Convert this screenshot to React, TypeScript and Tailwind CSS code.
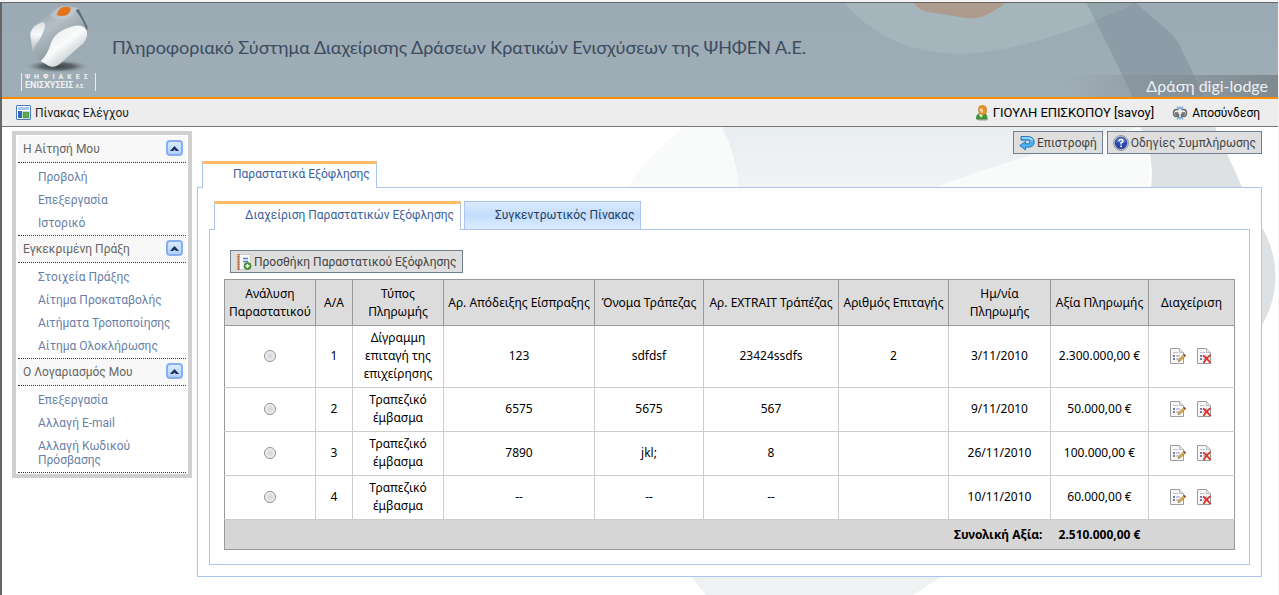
import { ReactNode, useState } from 'react';

const menu = [
    { title: 'Η Αίτησή Μου', items: ['Προβολή', 'Επεξεργασία', 'Ιστορικό'] },
    { title: 'Εγκεκριμένη Πράξη', items: ['Στοιχεία Πράξης', 'Αίτημα Προκαταβολής', 'Αιτήματα Τροποποίησης', 'Αίτημα Ολοκλήρωσης'] },
    { title: 'Ο Λογαριασμός Μου', items: ['Επεξεργασία', 'Αλλαγή E-mail', 'Αλλαγή Κωδικού Πρόσβασης'] },
];

const columns = [
    { label: 'Ανάλυση Παραστατικού', width: 'w-[91px]' },
    { label: 'Α/Α', width: 'w-[37px]' },
    { label: 'Τύπος Πληρωμής', width: 'w-[91px]' },
    { label: 'Αρ. Απόδειξης Είσπραξης', width: 'w-[151px]' },
    { label: 'Όνομα Τράπεζας', width: 'w-[109px]' },
    { label: 'Αρ. EXTRAIT Τράπέζας', width: 'w-[135px]' },
    { label: 'Αριθμός Επιταγής', width: 'w-[110px]' },
    { label: 'Ημ/νία Πληρωμής', width: 'w-[102px]' },
    { label: 'Αξία Πληρωμής', width: 'w-[98px]' },
    { label: 'Διαχείριση', width: 'w-[86px]' },
];

const payments = [
    { id: 1, type: 'Δίγραμμη επιταγή της επιχείρησης', receipt: '123', bank: 'sdfdsf', extrait: '23424ssdfs', cheque: '2', date: '3/11/2010', amount: '2.300.000,00 €' },
    { id: 2, type: 'Τραπεζικό έμβασμα', receipt: '6575', bank: '5675', extrait: '567', cheque: '', date: '9/11/2010', amount: '50.000,00 €' },
    { id: 3, type: 'Τραπεζικό έμβασμα', receipt: '7890', bank: 'jkl;', extrait: '8', cheque: '', date: '26/11/2010', amount: '100.000,00 €' },
    { id: 4, type: 'Τραπεζικό έμβασμα', receipt: '--', bank: '--', extrait: '--', cheque: '', date: '10/11/2010', amount: '60.000,00 €' },
];

function Logo() {
    return (
        <svg width="80" height="70" viewBox="30 6 240 210" aria-hidden="true">
            <defs>
                <linearGradient id="gem" x1="0" y1="0" x2="0.6" y2="1">
                    <stop offset="0" stopColor="#84939c" />
                    <stop offset="0.4" stopColor="#b4bfc5" />
                    <stop offset="1" stopColor="#7a8890" />
                </linearGradient>
                <linearGradient id="petalLeft" x1="0" y1="0" x2="0" y2="1">
                    <stop offset="0" stopColor="#dbe0e3" />
                    <stop offset="0.4" stopColor="#f7f8f9" />
                    <stop offset="1" stopColor="#a9b4ba" />
                </linearGradient>
                <linearGradient id="petalRight" x1="0.2" y1="0" x2="0.9" y2="0.8">
                    <stop offset="0" stopColor="#e4e8ea" />
                    <stop offset="0.5" stopColor="#fafbfb" />
                    <stop offset="0.8" stopColor="#cfd5d8" />
                    <stop offset="1" stopColor="#7f8e96" />
                </linearGradient>
                <radialGradient id="gemShadow">
                    <stop offset="0" stopColor="#3c4246" />
                    <stop offset="0.5" stopColor="#5d666b" />
                    <stop offset="1" stopColor="#9eacb5" stopOpacity="0" />
                </radialGradient>
            </defs>
            <ellipse cx="142" cy="196" rx="100" ry="20" fill="url(#gemShadow)" />
            <path d="M135 24 Q155 12 180 17 Q198 17 206 24 L230 72 Q236 90 230 108 Q226 122 214 134 L150 188 Q134 202 116 194 L78 170 Q68 162 68 146 L60 104 Q60 88 74 72 Z" fill="url(#gem)" />
            <path d="M61 98 Q66 74 98 63 Q110 66 102 86 Q94 110 82 124 Q70 142 69 156 L66 138 Z" fill="url(#petalLeft)" />
            <path d="M92 180 Q112 162 122 128 Q136 86 196 74 Q222 72 231 90 Q234 104 226 118 Q220 130 208 138 L150 188 Q134 202 116 194 Z" fill="url(#petalRight)" />
            <path d="M196 28 L206 24 L232 76 Q234 84 230 88 Q218 54 196 28 Z" fill="#5f6f78" />
            <path d="M120 42 Q150 68 184 44 Q200 34 200 22 Q180 14 158 15 Q142 18 120 42 Z" fill="#c3ccd1" opacity="0.6" />
            <path d="M140 42 Q144 24 160 18 Q176 15 182 20 Q182 34 170 42 Q156 48 140 42 Z" fill="#e2731b" />
        </svg>
    );
}

function DashboardIcon() {
    return (
        <svg width="15" height="15" viewBox="0 0 15 15" aria-hidden="true">
            <rect x="0.5" y="0.5" width="14" height="14" rx="0.5" fill="#fff" stroke="#4a7abf" />
            <rect x="2" y="2" width="11" height="3" fill="#a9c8ef" />
            <rect x="2" y="6" width="4" height="7" fill="#2f66bb" />
            <rect x="7" y="7" width="6" height="6" fill="#5cab4d" stroke="#3f8a35" strokeWidth="0.6" />
        </svg>
    );
}

function UserIcon() {
    return (
        <svg width="14" height="16" viewBox="0 0 14 16" aria-hidden="true">
            <ellipse cx="7.5" cy="14.5" rx="6" ry="1.3" fill="#b5b5b5" />
            <path d="M1.500 14 Q1 9 5 8.500 H9 Q12.500 9 12 14 Z" fill="#3f9a30" stroke="#2c7522" strokeWidth="0.6" />
            <path d="M4 9 L6 13 L8.500 9 Z" fill="#e9f4e5" />
            <path d="M3.500 4 Q3.500 0.500 7.200 0.500 Q11.500 0.500 11.500 4.500 V7.500 Q9.500 10.500 7 9.500 Q3.500 9 3.500 4 Z" fill="#e8921f" stroke="#a66410" strokeWidth="0.5" />
            <path d="M4.500 4 Q7 2.500 8 4.500 V8 Q5 8 4.500 4 Z" fill="#fbd59c" />
        </svg>
    );
}

function LogoutIcon() {
    return (
        <svg width="16" height="14" viewBox="0 0 16 14" fill="none" aria-hidden="true">
            <path d="M6.500 3.500 H4.500 Q1.500 3.500 1.500 7 Q1.500 10.500 4.500 10.500 H6.500 V8.700 H4.500 Q3.500 8.500 3.500 7 H6.500" stroke="#666" strokeWidth="1.400" />
            <path d="M9.500 3.500 H11.500 Q14.500 3.500 14.500 7 Q14.500 10.500 11.500 10.500 H9.500 V8.700 H11.500 Q12.500 8.500 12.500 7 H9.500" stroke="#666" strokeWidth="1.400" />
            <path d="M5 0.500 L7 3 M8 0.500 V3 M11 0.500 L9 3 M5 13.500 L7 11 M8 13.500 V11 M11 13.500 L9 11" stroke="#5b95ea" strokeWidth="1.200" />
        </svg>
    );
}

function BackIcon() {
    return (
        <svg width="16" height="16" viewBox="0 0 16 16" aria-hidden="true">
            <path d="M2 1.500 H9 Q15.200 2 15.200 7 Q15.200 12.200 9 12.200 H6.500 V15 L0.800 10.500 L6.500 6.500 V8.800 H9 Q11 8.800 11 7 Q11 5.200 9 5.200 H2 Z" fill="#4db1f0" stroke="#1b6fba" strokeWidth="0.9" strokeLinejoin="round" />
            <path d="M3 2.800 H9 Q12.500 3 13.500 5.500" fill="none" stroke="#b5e2fb" strokeWidth="1.200" />
        </svg>
    );
}

function HelpIcon() {
    return (
        <svg width="16" height="16" viewBox="0 0 16 16" aria-hidden="true">
            <circle cx="8" cy="8" r="7.500" fill="#d5d8de" stroke="#80858f" strokeWidth="0.8" />
            <circle cx="8" cy="8" r="6" fill="#2a48ae" stroke="#1a2d7e" strokeWidth="0.6" />
            <path d="M3 7 Q4 2.500 8 2.500 Q12 2.500 13 7 Q8 8.500 3 7 Z" fill="#6a86dc" opacity="0.7" />
            <path d="M6 6.200 Q6 4.400 8 4.400 Q10 4.400 10 6 Q10 7.200 8.100 7.800 V9.400" fill="none" stroke="#fff" strokeWidth="1.500" />
            <rect x="7.300" y="10.500" width="1.600" height="1.600" fill="#fff" />
        </svg>
    );
}

function AddIcon() {
    return (
        <svg width="16" height="16" viewBox="0 0 16 16" aria-hidden="true">
            <rect x="2.500" y="0.500" width="12" height="15" rx="1" fill="#fafafa" stroke="#c2c2c2" strokeWidth="0.8" />
            <rect x="1.500" y="0" width="2" height="16" fill="#a9572a" />
            <path d="M0.500 1.500 H3 M0.500 4 H3 M0.500 6.500 H3 M0.500 9 H3 M0.500 11.500 H3 M0.500 14 H3" stroke="#e8c4a8" strokeWidth="0.9" />
            <path d="M7 4.500 H12 M7 7.500 H12" stroke="#4e86df" strokeWidth="1.400" />
            <circle cx="11.500" cy="12" r="3.600" fill="#4c9a35" stroke="#2b6b1b" strokeWidth="0.6" />
            <path d="M11.500 10 V14 M9.500 12 H13.500" stroke="#fff" strokeWidth="1.300" />
        </svg>
    );
}

function PageShape() {
    return (
        <>
            <path d="M0.500 0.500 H9.500 L13.500 4.500 V15.500 H0.500 Z" fill="#f8f8f8" stroke="#9c9c9c" />
            <path d="M9.500 0.500 V4.500 H13.500" fill="#e4e4e4" stroke="#bcbcbc" />
            <path d="M3 4.500 H8" stroke="#c3c3cc" />
            <path d="M3 8 H5 M3 11 H5" stroke="#4d4d86" strokeWidth="1.600" />
            <path d="M6 8 H10 M6 11 H9" stroke="#9a9ab4" />
        </>
    );
}

function EditIcon() {
    return (
        <svg width="16" height="16" viewBox="0 0 16 16" aria-hidden="true">
            <PageShape />
            <path d="M8 13.500 L9 11.300 L13.700 6.700 L15.300 8.200 L10.300 12.800 Z" fill="#e8b84c" stroke="#8a6a2c" strokeWidth="0.7" />
            <path d="M13.400 7 L14.500 5.900 L16 7.300 L15 8.400 Z" fill="#8c2f39" />
        </svg>
    );
}

function DeleteIcon() {
    return (
        <svg width="16" height="16" viewBox="0 0 16 16" aria-hidden="true">
            <PageShape />
            <path d="M6 7.500 Q10 10 13.500 15 M13.500 7 Q9 10 6.500 15" fill="none" stroke="#dd3322" strokeWidth="1.800" />
        </svg>
    );
}

function HeaderArt() {
    return (
        <svg className="absolute top-0 right-0 h-full w-[440px]" viewBox="0 0 440 94" preserveAspectRatio="xMaxYMin slice" aria-hidden="true">
            <path d="M6 0 Q50 50 120 51 Q190 50 300 0 Z" fill="#a5b5bc" />
            <path d="M76 0 Q80 7 90 9 L128 15 Q145 18 167 0 Z" fill="#ad9c8e" />
            <path d="M249 0 H298 L329 27 Q338 34 343 45 L366 94 H295 Z" fill="#8e9ca7" />
            <path d="M249 0 H298 Q275 11 257 17 Z" fill="#93a5ac" />
        </svg>
    );
}

function PageArt() {
    return (
        <svg className="absolute top-0 right-0 h-[468px] w-[660px]" viewBox="0 0 660 468" aria-hidden="true">
            <defs>
                <linearGradient id="sheet" x1="0" y1="0" x2="0" y2="1">
                    <stop offset="0" stopColor="#e9eef0" />
                    <stop offset="1" stopColor="#f1f3f5" />
                </linearGradient>
            </defs>
            <path d="M67 0 Q32 26 8 62 H121 Q118 27 104 0 Z" fill="#f9fafa" />
            <path d="M104 0 H524 Q420 22 313 62 H121 Q118 27 104 0 Z" fill="url(#sheet)" />
            <path d="M524 0 Q420 22 313 62 H530 Q534 27 524 0 Z" fill="#f9fafa" />
            <path d="M515 0 H597 L625 62 H533 Q537 27 522 0 Z" fill="#dde1e4" />
            <path d="M640 93 Q675 150 640 205 Z" fill="#dde1e4" />
            <path d="M72 448 H326 L295 468 H88 Z" fill="#eff2f3" />
        </svg>
    );
}

function ToolButton({ icon, children }: { icon: ReactNode; children: ReactNode }) {
    return (
        <button type="button" className="flex h-[23px] items-center gap-0.5 border border-[#708090] bg-[#dedede] px-[5px] font-[Roboto,sans-serif] text-[12px] leading-4 whitespace-nowrap text-[#444]">
            {icon}
            <span>{children}</span>
        </button>
    );
}

function MenuSection({ title, items }: { title: string; items: string[] }) {
    const [open, setOpen] = useState(true);

    return (
        <section className="px-0.5">
            <h2 className="flex h-[27px] items-center justify-between border-b border-dotted border-[#333] bg-[#f8f8f8] pr-[3px] pl-[5px] text-[12px] text-[#666]">
                {title}
                <button
                    type="button"
                    aria-label={title}
                    aria-expanded={open}
                    onClick={() => setOpen(!open)}
                    className="mb-0.5 flex h-4 w-[17px] items-center justify-center rounded-sm border-2 border-[#86aef0] bg-linear-to-b from-[#dcebff] to-[#b3d0f8]"
                >
                    <svg width="9" height="5" viewBox="0 0 9 5" aria-hidden="true">
                        <path d="M0 5 L4.500 0 L9 5 H6 L4.500 3.400 L3 5 Z" fill="#15305f" />
                    </svg>
                </button>
            </h2>
            {open && (
                <ul className="border-b border-dotted border-[#333] pt-0.5 pb-px pl-5">
                    {items.map((item) => (
                        <li key={item} className="pt-[5px] pr-3 pb-1 text-[12px] leading-[14px] text-[#6a7fa8]">
                            <a href="#">{item}</a>
                        </li>
                    ))}
                </ul>
            )}
        </section>
    );
}

function PaymentsTable() {
    const [selected, setSelected] = useState<number | null>(null);

    return (
        <table className="w-full table-fixed border-collapse border border-[#999] bg-white text-center text-[12px] leading-[18px] text-black">
            <thead>
                <tr className="h-[46px] bg-[#dcdcdc]">
                    {columns.map((c) => (
                        <th key={c.label} className={`${c.width} border border-[#999] p-0 font-normal`}>{c.label}</th>
                    ))}
                </tr>
            </thead>
            <tbody>
                {payments.map((p) => (
                    <tr key={p.id} className="*:border *:border-t-0 *:border-[#ccc] *:px-0 *:pt-[3px] *:pb-1 *:first:border-l-[#999] *:last:border-r-[#999]">
                        <td>
                            <input
                                type="radio"
                                name="payment"
                                aria-label={`Ανάλυση ${p.id}`}
                                checked={selected === p.id}
                                onChange={() => setSelected(p.id)}
                                className="mx-auto block size-3 appearance-none rounded-full border border-[#8e8f8f] bg-radial from-[#cfd4d9] to-[#f8f8f8] ring-1 ring-[#f4f4f4] ring-inset checked:from-[#245]"
                            />
                        </td>
                        <td>{p.id}</td>
                        <td className="px-2!">{p.type}</td>
                        <td>{p.receipt}</td>
                        <td>{p.bank}</td>
                        <td>{p.extrait}</td>
                        <td>{p.cheque}</td>
                        <td>{p.date}</td>
                        <td>{p.amount}</td>
                        <td>
                            <div className="flex justify-center gap-[11px]">
                                <button type="button" aria-label="Επεξεργασία"><EditIcon /></button>
                                <button type="button" aria-label="Διαγραφή"><DeleteIcon /></button>
                            </div>
                        </td>
                    </tr>
                ))}
            </tbody>
            <tfoot>
                <tr className="h-[30px] bg-[#d6d6d6] font-bold">
                    <td colSpan={8} className="pr-2 text-right">Συνολική Αξία:</td>
                    <td>2.510.000,00 €</td>
                    <td></td>
                </tr>
            </tfoot>
        </table>
    );
}

export default function App() {
    return (
        <div className="min-h-screen bg-[#f4f4f4] pt-0.5 pr-px font-['Noto_Sans',sans-serif]">
            <div className="flex min-h-[calc(100vh-2px)] flex-col border-t border-l-2 border-[#666] bg-white">
                <header className="relative flex h-24 border-b-2 border-[#ff8c00] bg-linear-to-b from-[#9baab4] to-[#9fadb6]">
                    <HeaderArt />
                    <div className="relative ml-[18px] w-20 shrink-0">
                        <Logo />
                        <div className="ml-px w-[75px] border-x border-[#e8ecee] pl-[3px] font-[Roboto,sans-serif] font-bold whitespace-nowrap text-[#eef1f3]">
                            <div className="text-[7px] leading-[8px] tracking-[4px]">ΨΗΦΙΑΚΕΣ</div>
                            <div className="text-[9px] leading-[9px]">ΕΝΙΣΧΥΣΕΙΣ <span className="text-[5px]">Α.Ε.</span></div>
                        </div>
                    </div>
                    <h1 className="relative mt-8 ml-3 font-[Lato,'Noto_Sans',sans-serif] text-[18px] leading-6 text-[#3c4b5f]">
                        Πληροφοριακό Σύστημα Διαχείρισης Δράσεων Κρατικών Ενισχύσεων της ΨΗΦΕΝ Α.Ε.
                    </h1>
                    <div className="absolute right-0 bottom-0 h-[22px] bg-linear-to-r from-transparent to-[#7f8990] pr-2.5 pl-20 font-[Lato,'Noto_Sans',sans-serif] text-[16px] leading-[22px] text-[#eef1f3]">
                        Δράση digi-lodge
                    </div>
                </header>

                <nav className="flex h-7 items-center justify-between border-b border-[#777] bg-[#ededed] pr-[18px] pl-3.5 font-[Roboto,sans-serif] text-[12px] text-black">
                    <a href="#" className="flex items-center gap-1 text-[#222]">
                        <DashboardIcon />
                        Πίνακας Ελέγχου
                    </a>
                    <div className="flex items-center gap-[18px]">
                        <span className="flex items-center gap-1 text-[13px]"><UserIcon />ΓΙΟΥΛΗ ΕΠΙΣΚΟΠΟΥ [savoy]</span>
                        <a href="#" className="flex items-center gap-1"><LogoutIcon />Αποσύνδεση</a>
                    </div>
                </nav>

                <div className="relative flex grow items-start overflow-hidden pt-1 pr-4 pl-2.5">
                    <PageArt />
                    <aside className="relative w-[180px] shrink-0 border-4 border-[#d0d0d0] bg-white pt-px pb-px font-[Roboto,sans-serif]">
                        {menu.map((m) => <MenuSection key={m.title} title={m.title} items={m.items} />)}
                    </aside>

                    <main className="relative ml-[5px] min-w-0 grow">
                        <div className="flex justify-end gap-1">
                            <ToolButton icon={<BackIcon />}>Επιστροφή</ToolButton>
                            <ToolButton icon={<HelpIcon />}>Οδηγίες Συμπλήρωσης</ToolButton>
                        </div>

                        <div className="mt-[7px] ml-[5px] flex">
                            <button type="button" className="relative z-10 -mb-px h-[27px] border border-t-3 border-b-0 border-[#aac6ee] border-t-[#ffbb66] bg-white pr-1.5 pb-1 pl-[30px] font-[Roboto,sans-serif] text-[12px] leading-4 text-[#3a5f9f]">
                                Παραστατικά Εξόφλησης
                            </button>
                        </div>
                        <div className="border border-[#aac6ee] bg-white p-[11px] pt-[13px]">
                            <div className="ml-[5px] flex gap-[3px]">
                                <button type="button" className="relative z-10 -mb-px h-[29px] border border-t-3 border-b-0 border-[#aac6ee] border-t-[#ffbb66] bg-white pr-1.5 pb-1 pl-[30px] font-[Roboto,sans-serif] text-[12px] leading-4 text-[#3a5f9f]">
                                    Διαχείριση Παραστατικών Εξόφλησης
                                </button>
                                <button type="button" className="h-7 border border-b-0 border-[#aac6ee] bg-linear-to-b from-[#dcebfd] via-[#c2dcfb] to-[#deedff] pr-1.5 pb-0.5 pl-[30px] font-[Roboto,sans-serif] text-[12px] leading-4 text-[#1f3d66]">
                                    Συγκεντρωτικός Πίνακας
                                </button>
                            </div>
                            <div className="border border-[#aac6ee] px-3.5 pt-5 pb-3.5">
                                <div className="mb-1.5 ml-1.5 flex">
                                    <ToolButton icon={<AddIcon />}>Προσθήκη Παραστατικού Εξόφλησης</ToolButton>
                                </div>
                                <PaymentsTable />
                            </div>
                        </div>
                    </main>
                </div>
            </div>
        </div>
    );
}
